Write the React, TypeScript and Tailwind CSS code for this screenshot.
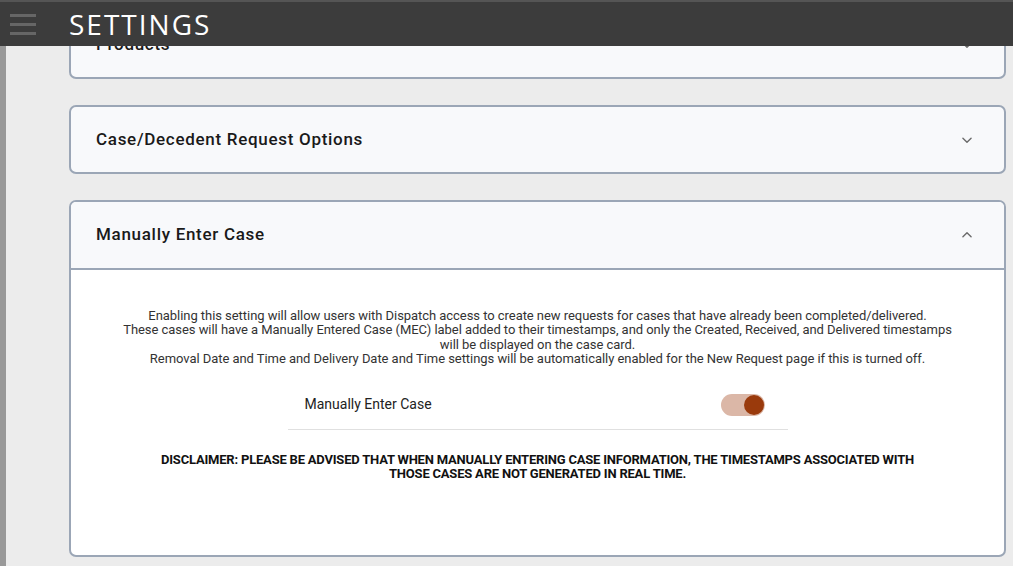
function Chevron({ up }: { up?: boolean }) {
  return (
    <svg width="14" height="14" viewBox="0 0 24 24" fill="none" stroke="#6b6b6b" strokeWidth="2.4" strokeLinecap="round" strokeLinejoin="round">
      {up ? <path d="M5 15l7-7 7 7" /> : <path d="M5 9l7 7 7-7" />}
    </svg>
  );
}

function CollapsedCard({ title }: { title: string }) {
  return (
    <div className="flex h-[69px] items-center justify-between rounded-[7px] border-2 border-[#9ba6b6] bg-[#f8f9fb] pl-[25px] pr-[30px]">
      <span className="text-[17px] font-medium tracking-[0.7px] text-[#1a1a1a]">{title}</span>
      <Chevron />
    </div>
  );
}

export default function App() {
  return (
    <div className="relative flex h-[566px] w-[1013px] overflow-hidden bg-[#ececec] font-['Roboto',sans-serif]">
      <header className="absolute left-0 right-0 top-0 z-10 flex h-[46px] items-center border-t-2 border-[#555] bg-[#3c3c3c]">
        <div className="ml-[10px] flex w-[26px] flex-col gap-[6px]">
          <span className="h-[3px] bg-[#666]" />
          <span className="h-[3px] bg-[#666]" />
          <span className="h-[3px] bg-[#666]" />
        </div>
        <h1 className="ml-[33px] font-['Open_Sans',sans-serif] text-[28px] leading-none tracking-[2px] text-white">SETTINGS</h1>
      </header>

      <div className="w-[6px] shrink-0 bg-[#999]" />

      <main className="flex flex-1 flex-col gap-[26px] pl-[63px] pr-[7px] pt-[10px]">
        <CollapsedCard title="Products" />
        <CollapsedCard title="Case/Decedent Request Options" />

        <div className="flex h-[357px] flex-col overflow-hidden rounded-[7px] border-2 border-[#9ba6b6] bg-white">
          <div className="flex h-[68px] shrink-0 items-center justify-between border-b-2 border-[#9ba6b6] bg-[#f8f9fb] pl-[25px] pr-[30px]">
            <span className="text-[17px] font-medium tracking-[0.7px] text-[#1a1a1a]">Manually Enter Case</span>
            <Chevron up />
          </div>
          <div className="flex flex-col items-center pt-[39px]">
            <p className="text-center text-[13px] leading-[14.3px] tracking-[-0.05px] text-[#333]">
              Enabling this setting will allow users with Dispatch access to create new requests for cases that have already been completed/delivered.
              <br />
              These cases will have a Manually Entered Case (MEC) label added to their timestamps, and only the Created, Received, and Delivered timestamps
              <br />
              will be displayed on the case card.
              <br />
              Removal Date and Time and Delivery Date and Time settings will be automatically enabled for the New Request page if this is turned off.
            </p>
            <div className="mt-[14px] flex h-[50px] w-[500px] items-center justify-between border-b border-[#e0e0e0] pl-[17px] pr-[23px]">
              <span className="text-[14px] text-[#222]">Manually Enter Case</span>
              <div className="flex h-[22px] w-[44px] items-center justify-end rounded-full bg-[#dbb7a7] pr-[1px]">
                <span className="h-[20px] w-[20px] rounded-full bg-[#9a3a0c]" />
              </div>
            </div>
            <p className="mt-[23px] w-[775px] text-center text-[13px] font-bold leading-[14px] tracking-[-0.2px] text-[#111]">
              DISCLAIMER: PLEASE BE ADVISED THAT WHEN MANUALLY ENTERING CASE INFORMATION, THE TIMESTAMPS ASSOCIATED WITH THOSE CASES ARE NOT GENERATED IN REAL TIME.
            </p>
          </div>
        </div>
      </main>
    </div>
  );
}
